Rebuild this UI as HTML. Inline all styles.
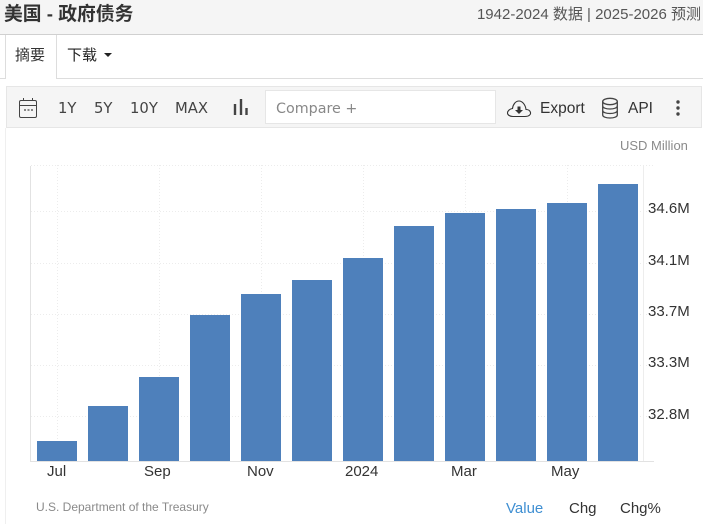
<!DOCTYPE html>
<html><head><meta charset="utf-8">
<style>
html,body{margin:0;padding:0;background:#fff}
body{width:703px;height:524px;overflow:hidden;position:relative;font-family:"Liberation Sans","Noto Sans CJK SC",sans-serif;color:#333}
.a{position:absolute;white-space:nowrap;line-height:1}
.b{position:absolute;background:#4e80bb;width:40px}
.lbl{font-size:15px;color:#333}
.tb{color:#444;top:102px;font-family:"DejaVu Sans",sans-serif;font-size:14.8px}
svg{position:absolute;left:0;top:0}
</style></head><body>
<div class="a" style="left:0;top:0;width:703px;height:34px;background:#f5f5f5"></div>
<div class="a" style="left:0;top:34px;width:703px;height:1px;background:#d0d0d0"></div>
<div class="a" style="left:4px;top:3px;font-size:18.8px;font-weight:bold;color:#333;line-height:22px">美国 - 政府债务</div>
<div class="a" style="right:2px;top:6px;font-size:15px;color:#555;line-height:18px">1942-2024 数据 | 2025-2026 预测</div>

<div class="a" style="left:0;top:78px;width:703px;height:1px;background:#ddd"></div>
<div class="a" style="left:5px;top:35px;width:52px;height:44px;background:#fff;border-left:1px solid #ddd;border-right:1px solid #ddd;box-sizing:border-box"></div>
<div class="a" style="left:15px;top:47px;font-size:15px;color:#333;line-height:18px">摘要</div>
<div class="a" style="left:67px;top:47px;font-size:15px;color:#222;line-height:18px">下载</div>
<div class="a" style="left:104px;top:53px;width:0;height:0;border-left:4px solid transparent;border-right:4px solid transparent;border-top:4px solid #222"></div>

<div class="a" style="left:6px;top:86px;width:696px;height:42px;background:#f5f5f5;border:1px solid #e6e6e6;box-sizing:border-box"></div>
<div class="a" style="left:5px;top:128px;width:1px;height:396px;background:#efefef"></div>
<div class="a" style="left:265px;top:90px;width:231px;height:34px;background:#fff;border:1px solid #e6e6e6;box-sizing:border-box"></div>
<div class="a tb" style="left:58px">1Y</div>
<div class="a tb" style="left:94px">5Y</div>
<div class="a tb" style="left:130px">10Y</div>
<div class="a tb" style="left:175px">MAX</div>
<div class="a tb" style="left:276px;color:#888;font-size:14.3px">Compare +</div>
<div class="a" style="left:540px;top:101px;font-size:15.5px;color:#333">Export</div>
<div class="a" style="left:628px;top:101px;font-size:15.5px;color:#333">API</div>

<svg width="703" height="524" viewBox="0 0 703 524" fill="none">
<!-- calendar -->
<rect x="19.5" y="100.5" width="17" height="17" rx="1.5" stroke="#444" stroke-width="1"/>
<path d="M19.5 105.5H36.5M23.5 98v3M32.5 98v3" stroke="#444" stroke-width="1"/>
<path d="M24 110h2M27.5 110h2M31 110h2" stroke="#444" stroke-width="1.2"/>
<!-- bars icon -->
<path d="M235 104v11M241 99v16M246.500 108v7" stroke="#444" stroke-width="2.4"/>
<!-- cloud -->
<path d="M513 116.500H525C529 116.500 531 114.500 530.500 112.500C530 110.500 528 109.500 526 109.500C525.500 105 522.500 101 519 101C515.500 101 513 104.500 512.500 108.500C509.500 109 507.500 111 507.500 113C507.500 115 510 116.500 513 116.500Z" stroke="#333" stroke-width="1.100"/>
<path d="M517.500 106.500h3v3.500h2.500l-4 4-4-4h2.500z" fill="#333"/>
<!-- database -->
<ellipse cx="610" cy="101.500" rx="7.300" ry="3.200" stroke="#444" stroke-width="1.300"/>
<path d="M602.700 101.500v13.500c0 1.800 3.300 3 7.300 3s7.300-1.200 7.300-3v-13.500M602.700 106c0 1.800 3.300 3 7.300 3s7.300-1.200 7.300-3M602.700 110.500c0 1.800 3.300 3 7.300 3s7.300-1.200 7.300-3" stroke="#444" stroke-width="1.300"/>
<!-- kebab -->
<circle cx="678" cy="102" r="1.700" fill="#444"/><circle cx="678" cy="108" r="1.700" fill="#444"/><circle cx="678" cy="114" r="1.700" fill="#444"/>
<!-- grid -->
<g stroke="#ececec" stroke-width="1" stroke-dasharray="1 2">
<path d="M31 165.500H654M31 211.500H654M31 263.500H654M31 314.500H654M31 365.500H654M31 416.500H654"/>
<path d="M57.500 165V461M159.500 165V461M261.500 165V461M363.500 165V461M465.500 165V461M567.500 165V461"/>
</g>
<path d="M30.500 166V461.500H654" stroke="#e2e2e2" stroke-width="1"/>
<path d="M643.500 166V461" stroke="#ededed" stroke-width="1"/>
</svg>

<div class="b" style="left:37px;top:441px;height:20px"></div>
<div class="b" style="left:88px;top:406px;height:55px"></div>
<div class="b" style="left:139px;top:377px;height:84px"></div>
<div class="b" style="left:190px;top:315px;height:146px"></div>
<div class="b" style="left:241px;top:294px;height:167px"></div>
<div class="b" style="left:292px;top:280px;height:181px"></div>
<div class="b" style="left:343px;top:258px;height:203px"></div>
<div class="b" style="left:394px;top:226px;height:235px"></div>
<div class="b" style="left:445px;top:213px;height:248px"></div>
<div class="b" style="left:496px;top:209px;height:252px"></div>
<div class="b" style="left:547px;top:203px;height:258px"></div>
<div class="b" style="left:598px;top:184px;height:277px"></div>

<div class="a" style="left:620px;top:139px;font-size:13px;color:#8a8a8a">USD Million</div>
<div class="a lbl" style="left:648px;top:201px">34.6M</div>
<div class="a lbl" style="left:648px;top:253px">34.1M</div>
<div class="a lbl" style="left:648px;top:304px">33.7M</div>
<div class="a lbl" style="left:648px;top:355px">33.3M</div>
<div class="a lbl" style="left:648px;top:407px">32.8M</div>

<div class="a lbl" style="left:47px;top:464px">Jul</div>
<div class="a lbl" style="left:144px;top:464px">Sep</div>
<div class="a lbl" style="left:247px;top:464px">Nov</div>
<div class="a lbl" style="left:345px;top:464px">2024</div>
<div class="a lbl" style="left:451px;top:464px">Mar</div>
<div class="a lbl" style="left:551px;top:464px">May</div>

<div class="a" style="left:36px;top:501px;font-size:12px;color:#8a8a8a">U.S. Department of the Treasury</div>
<div class="a lbl" style="left:506px;top:501px;color:#3f8fd2">Value</div>
<div class="a lbl" style="left:569px;top:501px">Chg</div>
<div class="a lbl" style="left:620px;top:501px">Chg%</div>
</body></html>
